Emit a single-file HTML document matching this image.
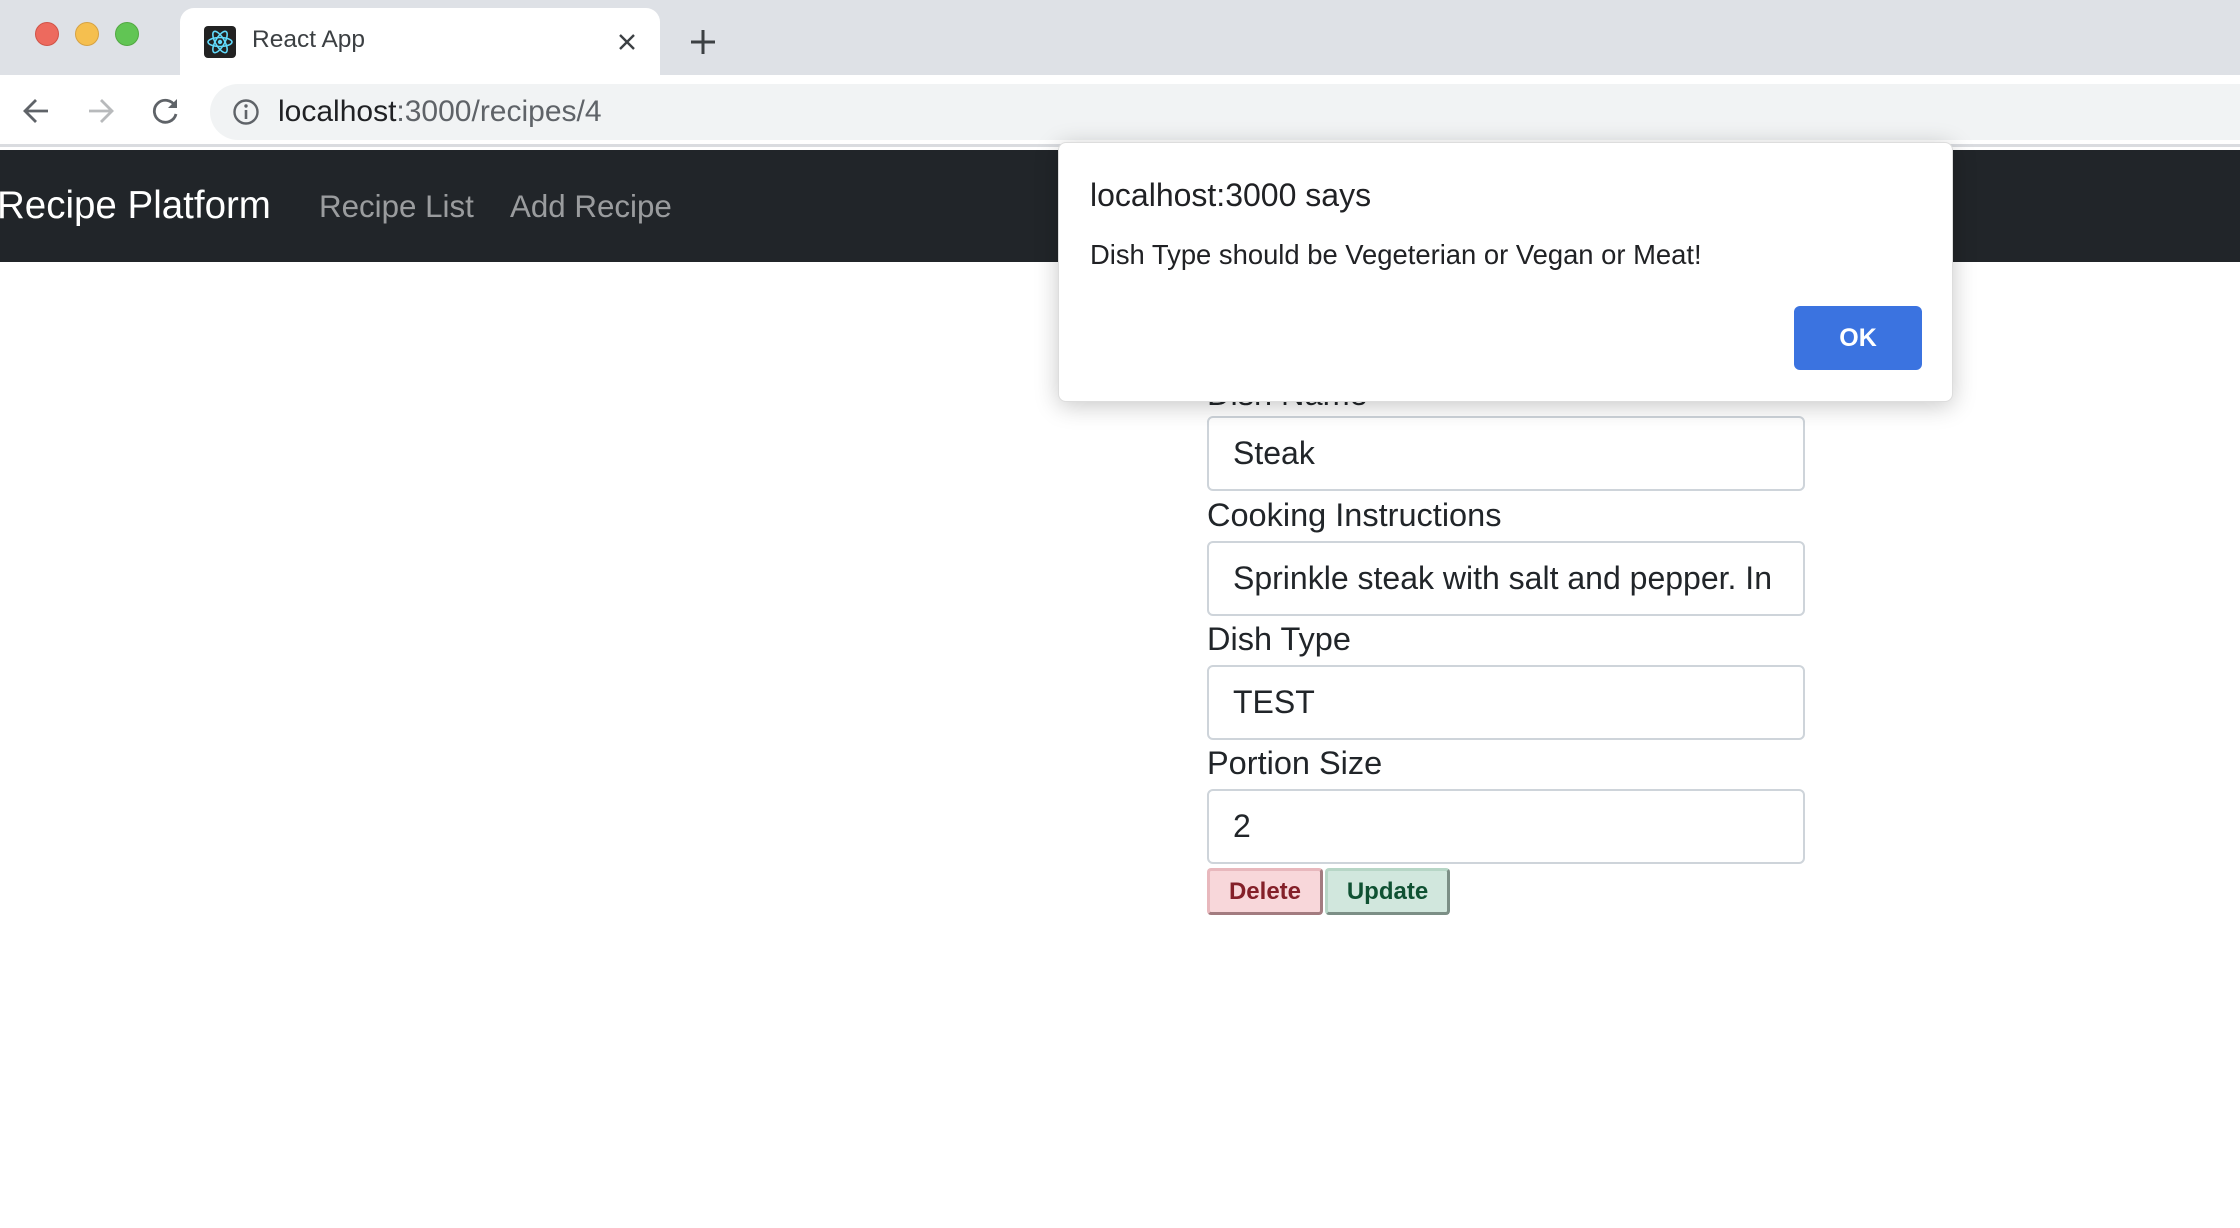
<!DOCTYPE html>
<html><head><meta charset="utf-8"><style>
*{box-sizing:border-box;margin:0;padding:0}
body{width:2240px;height:1228px;overflow:hidden;background:#fff;font-family:"Liberation Sans",sans-serif;position:relative}
.abs{position:absolute}
.strip{left:0;top:0;width:2240px;height:75px;background:#dee1e6}
.dot{width:24px;height:24px;border-radius:50%;top:22px}
.tab{left:180px;top:8px;width:480px;height:70px;background:#fff;border-radius:14px 14px 0 0}
.toolbar{left:0;top:75px;width:2240px;height:72px;background:#fff;border-bottom:3px solid #dadce0}
.url{left:210px;top:84px;width:2100px;height:56px;background:#f1f3f4;border-radius:28px}
.nav{left:0;top:150px;width:2240px;height:112px;background:#212529}
.lbl{left:1207px;font-size:32.5px;color:#212529}
.inp{left:1207px;width:598px;height:75px;border:2px solid #ced4da;border-radius:6px;font-size:32px;color:#212529;padding-left:24px;line-height:71px;white-space:nowrap;overflow:hidden}
.btn{top:868px;height:47px;font-weight:bold;font-size:24px;line-height:41px;text-align:center;border-radius:4px}
</style></head><body>
<div class="abs strip"></div>
<div class="abs dot" style="left:35px;background:#ed6a5e;border:1px solid #d05347"></div>
<div class="abs dot" style="left:75px;background:#f5bf4f;border:1px solid #d6a243"></div>
<div class="abs dot" style="left:115px;background:#61c554;border:1px solid #52a842"></div>
<div class="abs tab"></div>
<div class="abs" style="left:204px;top:26px;width:32px;height:32px;background:#222;border-radius:4px"></div>
<svg class="abs" style="left:204px;top:26px" width="32" height="32" viewBox="0 0 32 32"><g fill="none" stroke="#61dafb" stroke-width="1.6"><ellipse cx="16" cy="16" rx="12" ry="4.5"/><ellipse cx="16" cy="16" rx="12" ry="4.5" transform="rotate(60 16 16)"/><ellipse cx="16" cy="16" rx="12" ry="4.5" transform="rotate(120 16 16)"/></g><circle cx="16" cy="16" r="2.2" fill="#61dafb"/></svg>
<div class="abs" style="left:252px;top:26px;font-size:24.5px;color:#3c4043">React App</div>
<svg class="abs" style="left:617px;top:32px" width="20" height="20" viewBox="0 0 20 20"><path d="M3 3L17 17M17 3L3 17" stroke="#3c4043" stroke-width="2.4"/></svg>
<svg class="abs" style="left:690px;top:29px" width="26" height="26" viewBox="0 0 26 26"><path d="M13 1V25M1 13H25" stroke="#3c4043" stroke-width="3"/></svg>
<div class="abs toolbar"></div>
<svg class="abs" style="left:22px;top:97px" width="28" height="28" viewBox="0 0 28 28"><path d="M26 14H4M14 3L3 14L14 25" fill="none" stroke="#5f6368" stroke-width="2.8"/></svg>
<svg class="abs" style="left:87px;top:97px" width="28" height="28" viewBox="0 0 28 28"><path d="M2 14H24M14 3L25 14L14 25" fill="none" stroke="#b8babc" stroke-width="2.8"/></svg>
<svg class="abs" style="left:152px;top:97px" width="28" height="28" viewBox="0 0 28 28"><path d="M23 9A11 11 0 1 0 24 17" fill="none" stroke="#5f6368" stroke-width="2.8"/><path d="M25 2V11H16Z" fill="#5f6368"/></svg>
<div class="abs url"></div>
<svg class="abs" style="left:232px;top:98px" width="28" height="28" viewBox="0 0 28 28"><circle cx="14" cy="14" r="11.5" fill="none" stroke="#5f6368" stroke-width="2.4"/><path d="M14 12V21" stroke="#5f6368" stroke-width="2.6"/><circle cx="14" cy="8" r="1.7" fill="#5f6368"/></svg>
<div class="abs" style="left:278px;top:95px;font-size:30px;color:#202124">localhost<span style="color:#5f6368">:3000/recipes/4</span></div>
<div class="abs nav"></div>
<div class="abs" style="left:-3px;top:184px;font-size:38.5px;color:#fff">Recipe Platform</div>
<div class="abs" style="left:319px;top:189px;font-size:31.3px;color:rgba(255,255,255,.55)">Recipe List</div>
<div class="abs" style="left:510px;top:189px;font-size:31.3px;color:rgba(255,255,255,.55)">Add Recipe</div>
<div class="abs lbl" style="top:376px">Dish Name</div>
<div class="abs inp" style="top:416px">Steak</div>
<div class="abs lbl" style="top:497px">Cooking Instructions</div>
<div class="abs inp" style="top:541px">Sprinkle steak with salt and pepper. In</div>
<div class="abs lbl" style="top:621px">Dish Type</div>
<div class="abs inp" style="top:665px">TEST</div>
<div class="abs lbl" style="top:745px">Portion Size</div>
<div class="abs inp" style="top:789px">2</div>
<div class="abs btn" style="left:1207px;width:116px;background:#f8d7da;color:#842029;border:3px solid #e8b8bd;border-right-color:#a37c80;border-bottom-color:#a37c80">Delete</div>
<div class="abs btn" style="left:1325px;width:125px;background:#d1e7dd;color:#0f5132;border:3px solid #b7d6c6;border-right-color:#7c8f86;border-bottom-color:#7c8f86">Update</div>
<div class="abs" style="left:1058px;top:142px;width:895px;height:260px;background:#fff;border-radius:8px;box-shadow:0 4px 24px rgba(0,0,0,.22);border:1px solid #ddd"></div>
<div class="abs" style="left:1090px;top:177px;font-size:32px;color:#202124">localhost:3000 says</div>
<div class="abs" style="left:1090px;top:239px;font-size:27.4px;color:#202124">Dish Type should be Vegeterian or Vegan or Meat!</div>
<div class="abs" style="left:1794px;top:306px;width:128px;height:64px;background:#3b73e0;border-radius:6px;color:#fff;font-weight:bold;font-size:25px;line-height:64px;text-align:center">OK</div>
</body></html>
